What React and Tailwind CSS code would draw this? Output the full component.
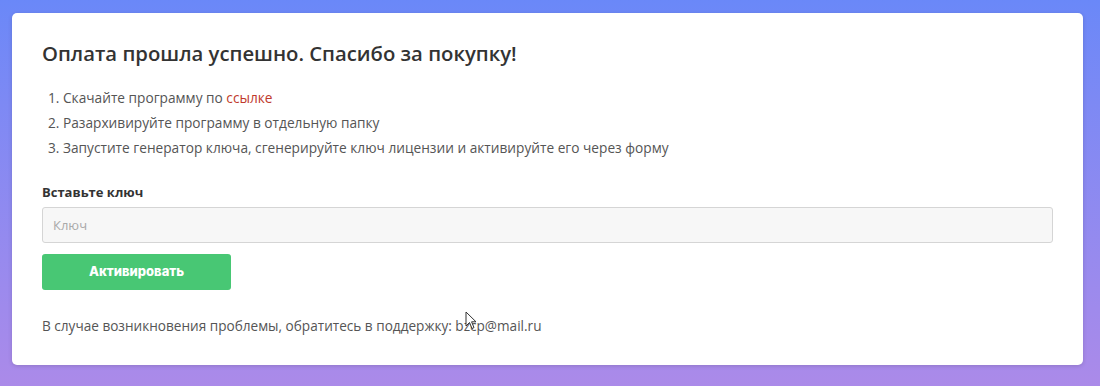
import React, { useState } from "react";

const steps = [
  "Разархивируйте программу в отдельную папку",
  "Запустите генератор ключа, сгенерируйте ключ лицензии и активируйте его через форму",
];

const App = () => {
  const [key, setKey] = useState("");

  return (
    <div className="relative h-[386px] overflow-hidden bg-gradient-to-b from-[#6a88f8] to-[#ab8ae9] pl-[12px] pr-[17px] pt-[13px] font-['Open_Sans',sans-serif]">
      <div className="h-[352px] rounded-[5px] bg-white px-[30px] pt-[26px] shadow-[0_1px_4px_rgba(0,0,0,0.15)]">
        <h1 className="text-[20.3px] font-semibold leading-[28px] text-[#333]">
          Оплата прошла успешно. Спасибо за покупку!
        </h1>

        <ol className="mt-[18px] pl-[6px] text-[13.7px] leading-[25px] text-[#555]">
          <li>
            1. Скачайте программу по{" "}
            <a href="#" className="text-[#c0392b]">
              ссылке
            </a>
          </li>
          {steps.map((step, index) => (
            <li key={index}>
              {index + 2}. {step}
            </li>
          ))}
        </ol>

        <label className="mt-[22px] block text-[13px] font-bold leading-[20px] text-[#333]">
          Вставьте ключ
        </label>
        <input
          value={key}
          onChange={(e) => setKey(e.target.value)}
          placeholder="Ключ"
          className="mt-[5px] block h-[36px] w-full rounded-[3px] border border-[#d5d5d5] bg-[#f7f7f7] px-[10px] text-[13px] text-[#333] placeholder:text-[#aaa] outline-none"
        />
        <button className="mt-[11px] h-[36px] w-[189px] rounded-[3px] bg-[#48c774] text-[13px] font-extrabold text-white font-['Inter',sans-serif]">
          Активировать
        </button>

        <p className="mt-[26px] text-[13.6px] leading-[20px] text-[#555]">
          В случае возникновения проблемы, обратитесь в поддержку: bzcp@mail.ru
        </p>
      </div>

      <svg
        className="absolute left-[465px] top-[311px]"
        width="12"
        height="19"
        viewBox="0 0 12 19"
      >
        <path
          d="M1 1 L1 15 L4.5 11.5 L7 17.5 L9 16.6 L6.6 10.8 L11 10.8 Z"
          fill="white"
          stroke="#333"
          strokeWidth="1"
        />
      </svg>
    </div>
  );
};

export default App;
